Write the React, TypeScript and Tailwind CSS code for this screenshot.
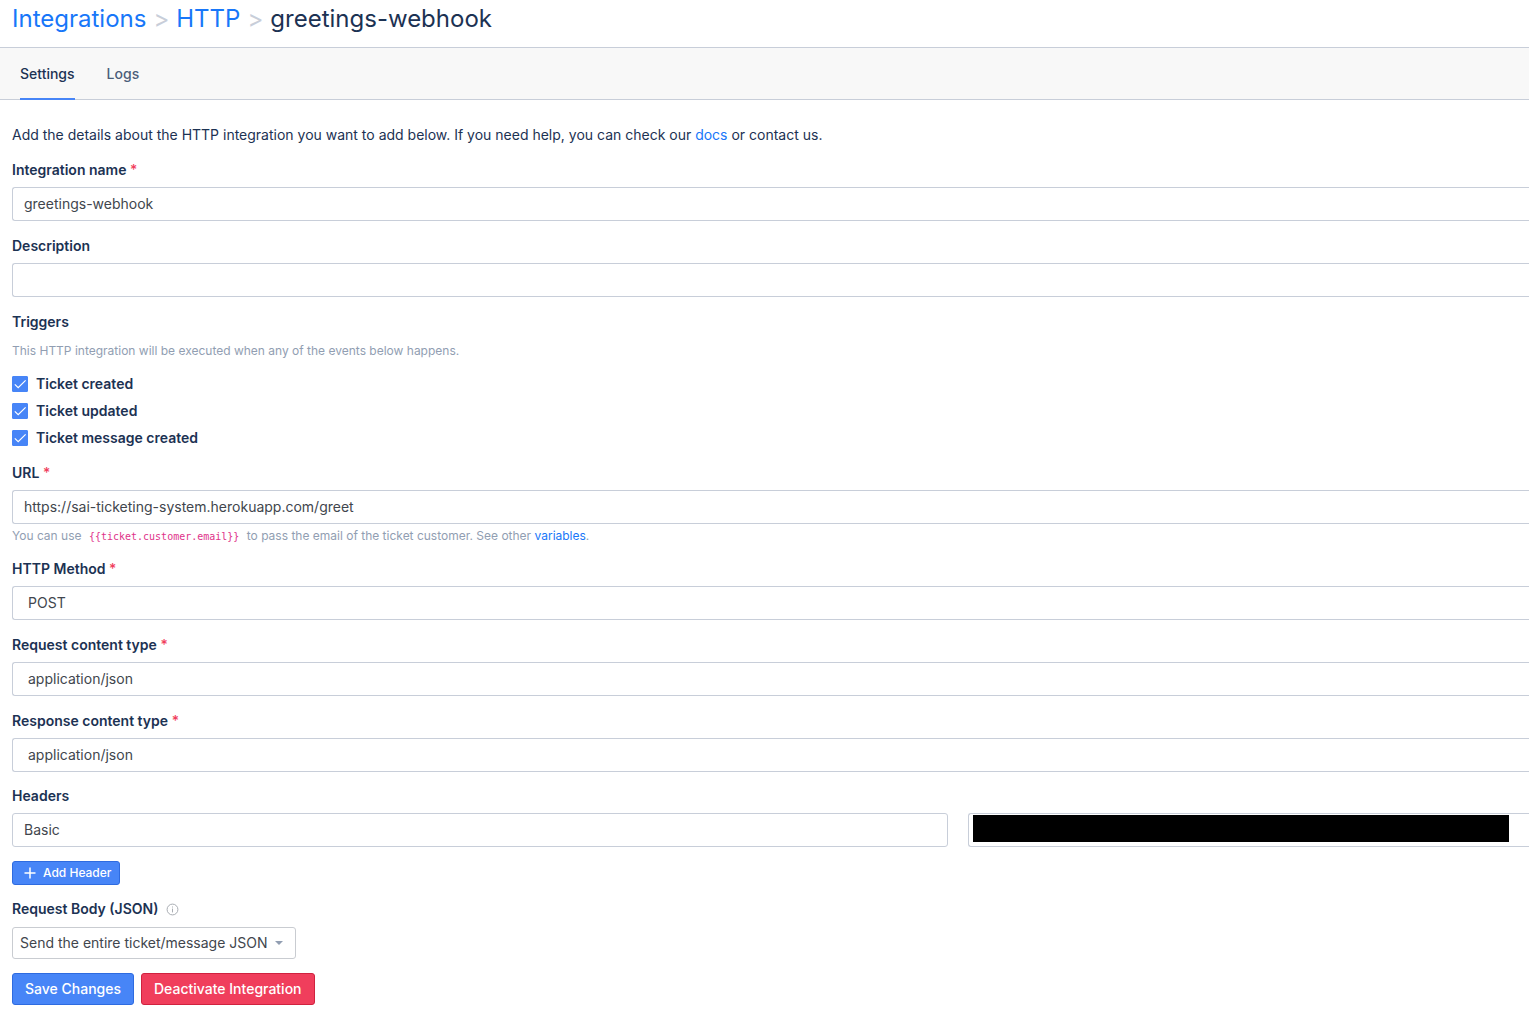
import { useState } from "react";
import type { ReactNode } from "react";

const inputClass =
  "block h-[34px] w-full appearance-none rounded-l-[3px] border border-r-0 border-[#c8ced9] bg-white px-[11px] pb-0.5 text-sm text-[#41464d] outline-none";
const selectClass =
  "block h-[34px] w-full appearance-none rounded-l-[3px] border border-r-0 border-[#c8ced9] bg-white px-[15px] text-sm text-[#41464d] outline-none";
const labelClass = "block text-sm leading-5 font-semibold text-[#1c3253]";

function Star() {
  return <span className="font-medium text-[#f03e5c]">*</span>;
}

function Field({
  id,
  label,
  required,
  children,
}: {
  id: string;
  label: string;
  required?: boolean;
  children: ReactNode;
}) {
  return (
    <div className="flex flex-col gap-[7px]">
      <label htmlFor={id} className={labelClass}>
        {label} {required && <Star />}
      </label>
      {children}
    </div>
  );
}

function Trigger({ label }: { label: string }) {
  const [on, setOn] = useState(true);
  return (
    <label className="flex h-5 items-center gap-2 text-sm font-semibold text-[#1c3253]">
      <span className="grid size-4">
        <input
          type="checkbox"
          checked={on}
          onChange={() => setOn(!on)}
          className="peer col-start-1 row-start-1 size-4 appearance-none rounded-[1px] border border-[#c8ced9] checked:border-[#4785f7] checked:bg-[#4785f7]"
        />
        <svg
          viewBox="0 0 16 16"
          className="pointer-events-none invisible col-start-1 row-start-1 size-4 peer-checked:visible"
          fill="none"
          stroke="#fff"
          strokeWidth="1.2"
        >
          <path d="M2.8 8.3 L6.2 11.7 L13.6 4.3" />
        </svg>
      </span>
      {label}
    </label>
  );
}

export default function App() {
  const [name, setName] = useState("greetings-webhook");
  const [description, setDescription] = useState("");
  const [url, setUrl] = useState("https://sai-ticketing-system.herokuapp.com/greet");
  const [header, setHeader] = useState("Basic");

  return (
    <div className="min-h-screen overflow-x-hidden bg-white font-['Inter',sans-serif] text-sm text-[#1c3253]">
      <nav aria-label="Breadcrumb" className="flex h-[47px] items-start gap-[7px] px-3 pt-[3px] text-2xl leading-8">
        <a href="#integrations" className="text-[#1877f9]">Integrations</a>
        <span className="text-[#c8ced9]">&gt;</span>
        <a href="#http" className="text-[#1877f9]">HTTP</a>
        <span className="text-[#c8ced9]">&gt;</span>
        <h1>greetings-webhook</h1>
      </nav>

      <div className="border-y border-[#c8ced9] bg-[#f8f8f8]">
        <div className="-mb-px flex h-[52px] gap-8 px-5 font-medium">
          <a href="#settings" className="flex items-center border-b-2 border-[#4785f7] pt-0.5">
            Settings
          </a>
          <a href="#logs" className="flex items-center border-b-2 border-transparent pt-0.5 text-[#4c5e7a]">
            Logs
          </a>
        </div>
      </div>

      <form onSubmit={(e) => e.preventDefault()} className="flex flex-col gap-3.5 pt-[25px] pb-5 pl-3">
        <div className="flex flex-col gap-[15px]">
          <p className="leading-5">
            Add the details about the HTTP integration you want to add below. If you need help, you can check our{" "}
            <a href="#docs" className="text-[#1877f9]">docs</a> or contact us.
          </p>

          <Field id="name" label="Integration name" required>
            <input id="name" value={name} onChange={(e) => setName(e.target.value)} className={inputClass} />
          </Field>

          <Field id="description" label="Description">
            <input
              id="description"
              value={description}
              onChange={(e) => setDescription(e.target.value)}
              className={inputClass}
            />
          </Field>

          <fieldset className="flex flex-col">
            <legend className={labelClass}>Triggers</legend>
            <p className="mt-[9px] mb-[13px] text-xs leading-5 text-[#919eb2]">
              This HTTP integration will be executed when any of the events below happens.
            </p>
            <div className="flex flex-col gap-[7px]">
              <Trigger label="Ticket created" />
              <Trigger label="Ticket updated" />
              <Trigger label="Ticket message created" />
            </div>
          </fieldset>

          <div className="flex flex-col gap-1">
            <Field id="url" label="URL" required>
              <input id="url" value={url} onChange={(e) => setUrl(e.target.value)} className={inputClass} />
            </Field>
            <p className="text-xs leading-4 text-[#919eb2]">
              You can use{" "}
              <code className="px-1 font-['DejaVu_Sans_Mono',monospace] text-[10px] leading-none text-[#e0338a]">
                {"{{ticket.customer.email}}"}
              </code>{" "}
              to pass the email of the ticket customer. See other{" "}
              <a href="#variables" className="text-[#1877f9]">variables</a>.
            </p>
          </div>

          <Field id="method" label="HTTP Method" required>
            <select id="method" className={selectClass}>
              <option>POST</option>
            </select>
          </Field>

          <Field id="request-type" label="Request content type" required>
            <select id="request-type" className={selectClass}>
              <option>application/json</option>
            </select>
          </Field>

          <Field id="response-type" label="Response content type" required>
            <select id="response-type" className={selectClass}>
              <option>application/json</option>
            </select>
          </Field>
        </div>

        <Field id="header-name" label="Headers">
          <div className="grid grid-cols-[5fr_3fr] gap-5">
            <input
              id="header-name"
              value={header}
              onChange={(e) => setHeader(e.target.value)}
              className="block h-[34px] w-full rounded-[3px] border border-[#c8ced9] bg-white px-[11px] pb-0.5 text-sm text-[#41464d] outline-none"
            />
            <div className="grid">
              <input aria-label="Header value" readOnly className={inputClass + " col-start-1 row-start-1"} />
              <div className="col-start-1 row-start-1 mt-0.5 mr-5 mb-[5px] ml-[5px] bg-black" />
            </div>
          </div>
        </Field>

        <button
          type="button"
          className="flex h-6 items-center gap-[7px] self-start rounded-[3px] border border-[#2e6be0] bg-[#4785f7] pr-2 pl-[11px] text-xs font-medium text-white"
        >
          <svg viewBox="0 0 12 12" className="size-3" stroke="#fff" strokeWidth="1.5">
            <path d="M6 .5V11.5M.5 6H11.5" />
          </svg>
          Add Header
        </button>

        <div className="flex flex-col items-start gap-2">
          <div className="flex items-center gap-2">
            <label htmlFor="body" className={labelClass}>Request Body (JSON)</label>
            <svg viewBox="0 0 13 13" className="size-[13px]" fill="none" stroke="#a9adb3" strokeWidth="1">
              <circle cx="6.5" cy="6.5" r="5.4" />
              <path d="M6.5 5.6V9.4M6.5 3.5V4.5" />
            </svg>
          </div>
          <div className="grid">
            <select
              id="body"
              className="col-start-1 row-start-1 h-8 appearance-none rounded-[3px] border border-[#c9ccd1] bg-white pr-[27px] pl-[7px] text-sm text-[#41464d] outline-none"
            >
              <option>Send the entire ticket/message JSON</option>
            </select>
            <svg
              viewBox="0 0 8 4"
              className="pointer-events-none col-start-1 row-start-1 mr-[13px] h-1 w-2 self-center justify-self-end"
              fill="#919eb2"
            >
              <path d="M0 0H8L4 4Z" />
            </svg>
          </div>
        </div>

        <div className="flex gap-[7px] font-medium text-white">
          <button type="submit" className="h-8 rounded-[3px] border border-[#2e6be0] bg-[#4785f7] px-3">
            Save Changes
          </button>
          <button type="button" className="h-8 rounded-[3px] border border-[#d0223f] bg-[#f03e5c] px-3">
            Deactivate Integration
          </button>
        </div>
      </form>
    </div>
  );
}
